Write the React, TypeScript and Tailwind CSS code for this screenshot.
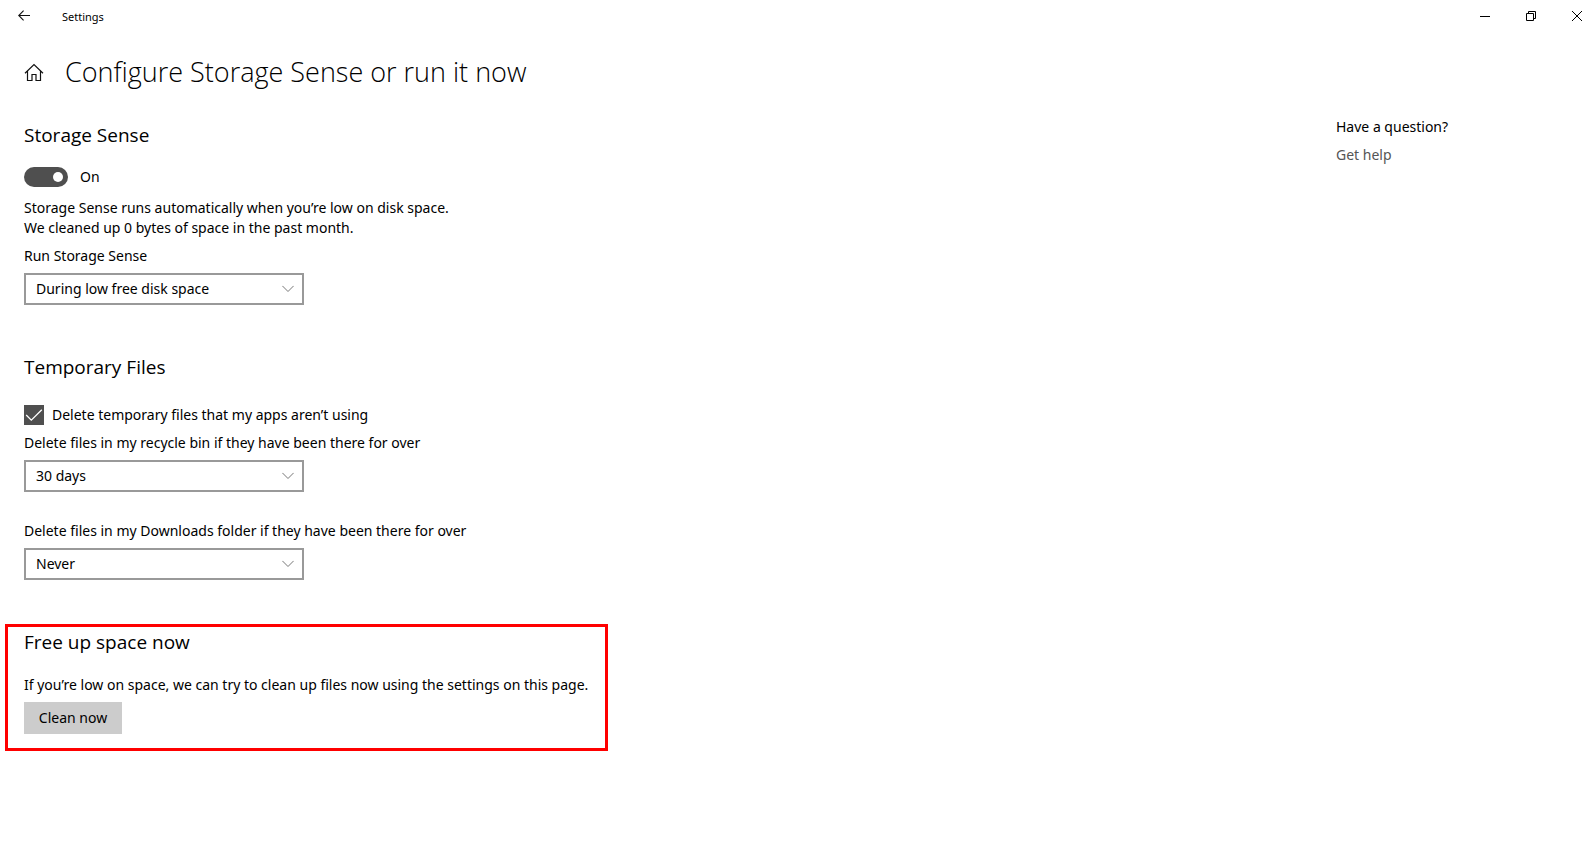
import { useState } from 'react';
import type { ReactNode } from 'react';

interface SelectFieldProps {
  id: string;
  label: string;
  options: string[];
}

function SelectField({ id, label, options }: SelectFieldProps) {
  const [value, setValue] = useState(options[0]);

  return (
    <div>
      <label htmlFor={id} className="block">{label}</label>
      <div className="relative mt-[7px] w-[280px] max-w-full">
        <select
          id={id}
          value={value}
          onChange={e => setValue(e.target.value)}
          className="block h-8 w-full appearance-none border-2 border-[#999999] bg-white pr-8 pl-2.5 text-black"
        >
          {options.map(o => <option key={o}>{o}</option>)}
        </select>
        <svg className="pointer-events-none absolute top-3 right-2.5" width="12" height="8" viewBox="0 0 12 8" fill="none" stroke="#777777">
          <path d="M0.4 0.9 L6 6.5 L11.6 0.9" />
        </svg>
      </div>
    </div>
  );
}

function SectionTitle({ children }: { children: ReactNode }) {
  return <h2 className="font-['Open_Sans',sans-serif] text-[19px] leading-7">{children}</h2>;
}

function TitleBar() {
  return (
    <header className="flex h-8 items-center">
      <button aria-label="Back" className="flex h-8 w-12 items-center pl-[18px]">
        <svg width="12" height="12" viewBox="0 0 12 12" fill="none" stroke="#111111" strokeWidth="1.1">
          <path d="M5.6 0.6 L0.7 5.5 L5.6 10.4 M0.7 5.5 H12" />
        </svg>
      </button>
      <span className="ml-3.5 pt-0.5 text-[11px] leading-4">Settings</span>
      <div className="ml-auto flex">
        <button aria-label="Minimize" className="flex h-8 w-[46px] items-center pl-[18px]">
          <svg width="10" height="10" viewBox="0 0 10 10" stroke="#000000">
            <path d="M0 5.5 H10" />
          </svg>
        </button>
        <button aria-label="Restore" className="flex h-8 w-[46px] items-center pl-[18px]">
          <svg width="10" height="10" viewBox="0 0 10 10" fill="none" stroke="#000000">
            <path d="M0.5 2.5 H7.5 V9.5 H0.5 Z M2.5 2.5 V0.5 H9.5 V7.5 H7.5" />
          </svg>
        </button>
        <button aria-label="Close" className="flex h-8 w-[38px] items-center pl-[18px]">
          <svg width="10" height="10" viewBox="0 0 10 10" stroke="#000000">
            <path d="M0 0 L10 10 M10 0 L0 10" />
          </svg>
        </button>
      </div>
    </header>
  );
}

export default function App() {
  const [enabled, setEnabled] = useState(true);
  const [deleteTemp, setDeleteTemp] = useState(true);

  return (
    <div className="min-h-screen bg-white font-['Noto_Sans','Open_Sans',sans-serif] text-sm leading-5 text-black">
      <TitleBar />

      {/* Page heading */}
      <div className="mt-[22px] flex h-9 items-center px-6">
        <button aria-label="Home" className="flex w-[41px] items-center">
          <svg width="20" height="20" viewBox="0 0 20 20" fill="none" stroke="#111111" strokeWidth="1.2">
            <path d="M1 11.3 L10 2.6 L19 11.3 M3.5 9.2 V18.5 H8 V12.5 H12 V18.5 H16.5 V9.2" />
          </svg>
        </button>
        <h1 className="font-['Open_Sans',sans-serif] text-[27px] leading-9 font-light">Configure Storage Sense or run it now</h1>
      </div>

      <div className="flex">
        <main className="min-w-0 flex-1 px-6 pt-[31px]">
          <section>
            <SectionTitle>Storage Sense</SectionTitle>
            <div className="mt-[18px] flex items-center gap-3">
              <span className="relative flex">
                <input
                  id="sense"
                  type="checkbox"
                  role="switch"
                  checked={enabled}
                  onChange={e => setEnabled(e.target.checked)}
                  className="h-5 w-11 appearance-none rounded-full bg-[#999999] checked:bg-[#4f4f4f]"
                />
                <span className={`pointer-events-none absolute top-[5px] size-2.5 rounded-full bg-white ${enabled ? 'right-[5px]' : 'left-[5px]'}`} />
              </span>
              <label htmlFor="sense">{enabled ? 'On' : 'Off'}</label>
            </div>
            <p className="mt-[11px] mb-2">
              Storage Sense runs automatically when you’re low on disk space.<br />
              We cleaned up 0 bytes of space in the past month.
            </p>
            <SelectField id="run" label="Run Storage Sense" options={['During low free disk space', 'Every day', 'Every week', 'Every month']} />
          </section>

          <section className="mt-12">
            <SectionTitle>Temporary Files</SectionTitle>
            <div className="mt-6 mb-2 flex items-center gap-2">
              <span className="relative flex">
                <input
                  id="temp"
                  type="checkbox"
                  checked={deleteTemp}
                  onChange={e => setDeleteTemp(e.target.checked)}
                  className="size-5 appearance-none border-2 border-[#4f4f4f] checked:bg-[#4f4f4f]"
                />
                {deleteTemp && (
                  <svg className="pointer-events-none absolute inset-0" width="20" height="20" viewBox="0 0 20 20" fill="none" stroke="#ffffff" strokeWidth="1.3">
                    <path d="M2.2 10 L7.3 15.2 L17.8 4.7" />
                  </svg>
                )}
              </span>
              <label htmlFor="temp">Delete temporary files that my apps aren’t using</label>
            </div>
            <div className="space-y-[29px]">
              <SelectField id="bin" label="Delete files in my recycle bin if they have been there for over" options={['30 days', 'Never', '1 day', '14 days', '60 days']} />
              <SelectField id="downloads" label="Delete files in my Downloads folder if they have been there for over" options={['Never', '1 day', '14 days', '30 days', '60 days']} />
            </div>
          </section>

          {/* Highlighted section */}
          <section className="mt-11 -ml-[19px] w-[603px] max-w-full border-3 border-[#ff0000] px-4 pt-px pb-3.5">
            <SectionTitle>Free up space now</SectionTitle>
            <p className="mt-[19px]">If you’re low on space, we can try to clean up files now using the settings on this page.</p>
            <button className="mt-[7px] h-8 min-w-[98px] bg-[#cccccc] px-3.5">Clean now</button>
          </section>
        </main>

        <aside className="w-64 shrink-0 pt-[27px]">
          <p>Have a question?</p>
          <a href="#help" className="mt-2 inline-block text-[#555555]">Get help</a>
        </aside>
      </div>
    </div>
  );
}
